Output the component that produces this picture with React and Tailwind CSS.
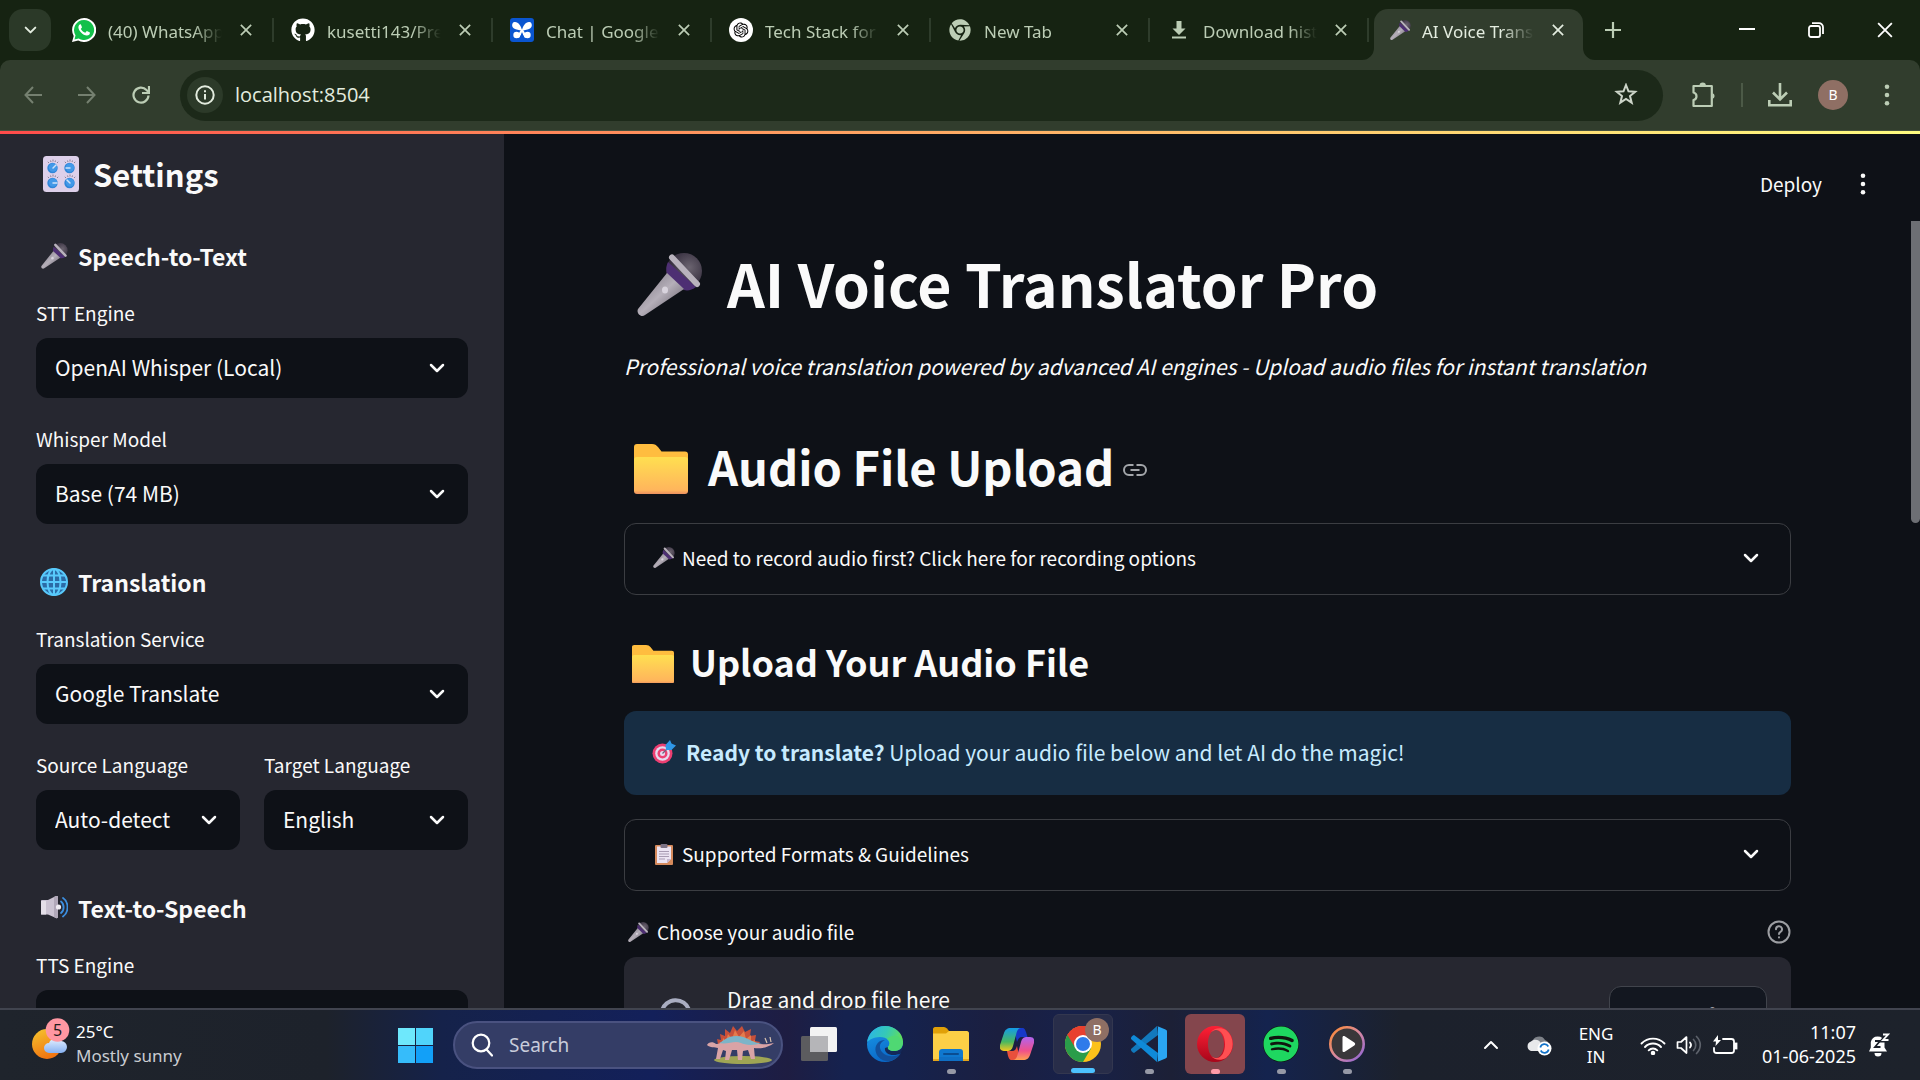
import React from "react";
import { FaGithub, FaChrome, FaSpotify } from "react-icons/fa";
import { RiOpenaiFill } from "react-icons/ri";

/* ---------- emoji drawings ---------- */

function Mic({ className }) {
  return (
    <svg viewBox="0 0 66 64" className={className} aria-hidden="true">
      <defs>
        <linearGradient id="micHandle" x1="0" y1="0" x2="1" y2="1">
          <stop offset="0.2" stopColor="#8d8792" />
          <stop offset="0.5" stopColor="#b5afb9" />
          <stop offset="0.8" stopColor="#7b7580" />
        </linearGradient>
        <radialGradient id="micHead" cx="0.65" cy="0.4" r="0.7">
          <stop offset="0" stopColor="#6b6470" />
          <stop offset="0.6" stopColor="#413a49" />
          <stop offset="1" stopColor="#2d2436" />
        </radialGradient>
      </defs>
      <circle cx="47" cy="18" r="18" fill="url(#micHead)" />
      <path d="M31 9c-2 4-2 8-1 12l17 16c4 1 8 0 12-3z" fill="#4d2f73" />
      <path d="M30 20 1 56c-2 4 3 9 7 6l39-26z" fill="url(#micHandle)" />
      <path d="M35 4.500 60 31" stroke="#b9b3bd" strokeWidth="6" strokeLinecap="round" />
      <ellipse cx="28" cy="37" rx="3" ry="3.500" fill="#d8d3dd" />
    </svg>
  );
}

function Knobs({ className }) {
  const spots = [[10, 12, 3, -3], [27, 12, -4, 0], [10, 27, 4, 0], [27, 27, -3, -3]];
  return (
    <svg viewBox="0 0 36 36" className={className} aria-hidden="true">
      <rect width="36" height="36" rx="3.500" fill="#ddd0ea" />
      {spots.map(([x, y, dx, dy], i) => (
        <g key={i}>
          <path
            d={`M${x - 4} ${y - 5}l-1.200-1.200M${x} ${y - 6.500}v-2M${x + 4} ${y - 5}l1.200-1.200M${x - 2} ${y - 6}l-.5-1.500M${x + 2} ${y - 6}l.5-1.500`}
            stroke="#8b8194"
            strokeWidth="1"
          />
          <circle cx={x - 0.5} cy={y} r="5.200" fill="#2f86d9" />
          <circle cx={x} cy={y - 0.5} r="4.200" fill="#4399e8" />
          <path d={`M${x} ${y}l${dx} ${dy}`} stroke="#cfe4fa" strokeWidth="1.500" strokeLinecap="round" />
        </g>
      ))}
    </svg>
  );
}

function Globe({ className }) {
  return (
    <svg viewBox="0 0 28 28" className={className} fill="none" stroke="#58c9fb" strokeWidth="2" aria-hidden="true">
      <circle cx="14" cy="14" r="13" fill="#2b6ba6" />
      <ellipse cx="14" cy="14" rx="6.500" ry="13" />
      <path d="M14 1v26M1 14h26M3 7.500h22M3 20.500h22" />
    </svg>
  );
}

function Speaker({ className }) {
  return (
    <svg viewBox="0 0 28 24" className={className} aria-hidden="true">
      <path d="M1 5c0-1 .5-1 1-1h6l8-4c1-.5 2 0 2 1v20c0 1-1 1.500-2 1l-8-3.500H2c-1 0-1-.5-1-1.500z" fill="#cbc3d2" />
      <path d="M1 5h5v13.500H1z" fill="#e4dfe8" />
      <path d="M14 1l2-1c1-.5 2 0 2 1v20c0 1-1 1.500-2 1l-2-1z" fill="#b1a8b9" />
      <circle cx="18.500" cy="11" r="2.600" fill="#f0ecf3" />
      <path d="M21 5.500c3.500 2.500 3.500 9 0 11.500M23 2c6 4 6 14.500 0 18.500" fill="none" stroke="#3c8fe0" strokeWidth="1.800" strokeLinecap="round" />
    </svg>
  );
}

function Folder({ className }) {
  return (
    <svg viewBox="0 0 54 50" className={className} aria-hidden="true">
      <defs>
        <linearGradient id="folderFront" x1="0" y1="0" x2="0" y2="1">
          <stop offset="0" stopColor="#ffdf50" />
          <stop offset="0.9" stopColor="#ffb55c" />
          <stop offset="1" stopColor="#ec9060" />
        </linearGradient>
      </defs>
      <path d="M0 3c0-2 1-3 3-3h15c3 0 4 1 6 3l3.500 4.500H51c2 0 3 1 3 3V20H0z" fill="#ffbd3f" />
      <path d="M0 16c0-2 1-3 3-3h48c2 0 3 1 3 3v31c0 2-1 3-3 3H3c-2 0-3-1-3-3z" fill="url(#folderFront)" />
    </svg>
  );
}

function Target({ className }) {
  return (
    <svg viewBox="0 0 24 24" className={className} aria-hidden="true">
      <circle cx="10.500" cy="13.500" r="10" fill="#ec3f72" />
      <circle cx="10.500" cy="13.500" r="7.300" fill="#e7d9ee" />
      <circle cx="10.500" cy="13.500" r="5" fill="#ec3f72" />
      <circle cx="10.500" cy="13.500" r="2.500" fill="#e7d9ee" />
      <path d="m10.500 13.500 7-7" stroke="#6b6480" strokeWidth="1.300" />
      <path d="m14 10-.5-5L18 0l1.500 3.500 4.500 2L19.500 10z" fill="#2f97e8" />
    </svg>
  );
}

function Clipboard({ className }) {
  return (
    <svg viewBox="0 0 18 21" className={className} aria-hidden="true">
      <rect y="1" width="18" height="20" rx="1" fill="#d58a5c" />
      <path d="M2 2.500h14V15l-4 4H2z" fill="#ece4f3" />
      <path d="M16 15h-4v4z" fill="#c5b7d0" />
      <rect x="5.500" y="0" width="7" height="4" rx="1" fill="#7d7386" />
      <path d="M4 7.500h10M4 10h10M4 12.500h10M4 15h6" stroke="#a89bb3" />
    </svg>
  );
}

/* ---------- small line icons ---------- */

function Chevron({ className, width = 2.5 }) {
  return (
    <svg viewBox="0 0 16 10" className={className} fill="none" stroke="currentColor" strokeWidth={width} strokeLinecap="round" strokeLinejoin="round" aria-hidden="true">
      <path d="m2 2 6 6 6-6" />
    </svg>
  );
}

function Cross({ className, width = 2 }) {
  return (
    <svg viewBox="0 0 14 14" className={className} stroke="currentColor" strokeWidth={width} aria-hidden="true">
      <path d="m1 1 12 12M13 1 1 13" />
    </svg>
  );
}

function Dots({ className }) {
  return (
    <svg viewBox="0 0 6 24" className={className} fill="currentColor" aria-hidden="true">
      <circle cx="3" cy="3" r="2.500" />
      <circle cx="3" cy="12" r="2.500" />
      <circle cx="3" cy="21" r="2.500" />
    </svg>
  );
}

/* ---------- browser ---------- */

const WhatsAppIcon = (
  <svg viewBox="0 0 24 24" className="size-6">
    <path d="M12 0a12 12 0 0 0-10.300 18L0 24l6.200-1.600A12 12 0 1 0 12 0z" fill="#fff" />
    <path d="M12 2a10 10 0 0 0-8.500 15.200L2.500 21.500l4.200-1.100A10 10 0 1 0 12 2z" fill="#12c04a" />
    <path d="M8.400 6.300c-.7 0-2 .9-2 3 0 3.300 4.300 8.200 8.500 8.200 1.900 0 3-1.200 3-2.400 0-.5-.1-.6-.4-.8l-2.200-1.100c-.4-.2-.6-.1-.9.2l-.9 1.100c-.2.2-.4.3-.8.100-1.400-.6-2.900-1.900-3.700-3.400-.2-.3-.1-.5.1-.7l.7-.8c.2-.3.2-.4.1-.7l-.9-2.200c-.2-.4-.3-.5-.6-.5z" fill="#fff" />
  </svg>
);

const BotIcon = (
  <svg viewBox="0 0 24 24" className="size-6">
    <rect width="24" height="24" rx="3" fill="#0a55d0" />
    <path d="m12 12.500 3.500 6M12 12.500l-3.500 6" stroke="#fff" strokeWidth="2.500" strokeLinecap="round" />
    <path d="M12 12.500C11.500 8 8 3.500 4.500 4 1.500 4.500 1.500 9 4 10.500c2 1.200 5 1.500 8 2zM12 12.500c.5-4.500 4-9 7.500-8.500 3 .5 3 5 .5 6.500-2 1.200-5 1.500-8 2z" fill="#fff" />
    <circle cx="6.500" cy="17" r="3.200" fill="#fff" />
    <circle cx="17.500" cy="17" r="3.200" fill="#fff" />
    <path d="m12 14-2.500 7h5z" fill="#0a55d0" />
  </svg>
);

const OpenAIIcon = (
  <span className="flex size-6 items-center justify-center rounded-full bg-white text-black">
    <RiOpenaiFill className="size-[18px]" />
  </span>
);

const DownloadIcon = (
  <svg viewBox="0 0 24 24" className="size-6" fill="#bccdb5">
    <path d="M9.500 3h5v7.500h4L12 17 5.500 10.500h4zM5 18.500h14v2H5z" />
  </svg>
);

const tabs = [
  { icon: WhatsAppIcon, title: "(40) WhatsApp" },
  { icon: <FaGithub className="size-6 text-white" />, title: "kusetti143/Pre" },
  { icon: BotIcon, title: "Chat | Google" },
  { icon: OpenAIIcon, title: "Tech Stack for" },
  { icon: <FaChrome className="size-[22px] text-[#bccdb5]" />, title: "New Tab" },
  { icon: DownloadIcon, title: "Download hist" },
];

function Tab({ icon, title }) {
  return (
    <div className="flex w-[219px] items-center pl-4 text-[#bccdb5]">
      <span className="flex w-6 justify-center">{icon}</span>
      <span className="ml-3 w-[114px] overflow-hidden pt-[3px] text-[17px] leading-6 whitespace-nowrap [mask-image:linear-gradient(to_right,black_75%,transparent)]">{title}</span>
      <button aria-label={`Close ${title}`} className="ml-4 flex size-4 items-center justify-center">
        <Cross className="size-3" />
      </button>
      <span className="mr-px ml-auto h-6 w-[2px] bg-[#2e3c2b]" />
    </div>
  );
}

function Flare({ className, d }) {
  return (
    <svg viewBox="0 0 12 12" className={className} fill="#313d2d" aria-hidden="true">
      <path d={d} />
    </svg>
  );
}

function TabStrip() {
  return (
    <div className="flex h-[60px] items-stretch bg-[#162312]">
      <button aria-label="Search tabs" className="ml-[9px] flex size-[42px] items-center justify-center self-center rounded-[14px] bg-[#2b3928] text-[#e3ecdf]">
        <Chevron className="h-2 w-[13px]" />
      </button>
      <div className="ml-[5px] flex">
        {tabs.map((t) => (
          <Tab key={t.title} {...t} />
        ))}
      </div>
      <div className="relative mt-[9px] ml-1 flex w-[209px] items-center rounded-t-[14px] bg-[#313d2d] pb-[9px] pl-4 text-[#e3ecdf]">
        <Flare className="absolute bottom-0 -left-3 size-3" d="M12 0v12H0A12 12 0 0 0 12 0z" />
        <Flare className="absolute -right-3 bottom-0 size-3" d="M0 0v12h12A12 12 0 0 1 0 0z" />
        <Mic className="w-[21px]" />
        <span className="ml-[11px] w-[112px] overflow-hidden pt-[3px] text-[17px] leading-6 whitespace-nowrap [mask-image:linear-gradient(to_right,black_70%,transparent)]">AI Voice Trans</span>
        <button aria-label="Close AI Voice Translator Pro" className="ml-4 flex size-4 items-center justify-center">
          <Cross className="size-3" />
        </button>
      </div>
      <button aria-label="New tab" className="ml-[22px] flex items-center text-[#bccdb5]">
        <svg viewBox="0 0 16 16" className="size-4" stroke="currentColor" strokeWidth="2.200">
          <path d="M8 0v16M0 8h16" />
        </svg>
      </button>
      <div className="mr-[27px] ml-auto flex items-center gap-[53px] text-white">
        <button aria-label="Minimize">
          <svg viewBox="0 0 16 16" className="size-4" stroke="currentColor" strokeWidth="2"><path d="M0 7h16" /></svg>
        </button>
        <button aria-label="Restore">
          <svg viewBox="0 0 16 16" className="size-4" fill="none" stroke="currentColor" strokeWidth="1.800">
            <rect x="1" y="4" width="11" height="11" rx="2" />
            <path d="M4 1.200h7a4 4 0 0 1 4 4V12" />
          </svg>
        </button>
        <button aria-label="Close window"><Cross className="size-4" width={1.600} /></button>
      </div>
    </div>
  );
}

function Toolbar() {
  return (
    <div className="bg-[#162312]">
      <div className="flex h-[71px] items-center rounded-t-[10px] border-b border-[#46523f] bg-[#313d2d] pl-6 text-[#bccdb5]">
        <button aria-label="Back" className="text-[#758070]">
          <svg viewBox="0 0 18 18" className="size-[18px]" fill="none" stroke="currentColor" strokeWidth="2"><path d="M18 9H1.500M9 1 1.500 9 9 17" /></svg>
        </button>
        <button aria-label="Forward" className="ml-9 text-[#758070]">
          <svg viewBox="0 0 18 18" className="size-[18px]" fill="none" stroke="currentColor" strokeWidth="2"><path d="M0 9h16.500M9 1l7.500 8L9 17" /></svg>
        </button>
        <button aria-label="Reload" className="ml-9">
          <svg viewBox="0 0 18 18" className="size-[18px]" fill="none" stroke="currentColor" strokeWidth="2.200">
            <path d="M16.500 9.500A7.500 7.500 0 1 1 14.500 4L17 6.500" />
            <path d="M17 0v7h-7" />
          </svg>
        </button>
        <div className="ml-[30px] flex h-[51px] flex-1 items-center rounded-full bg-[#1c2919] pl-[7px] text-[#e3ecdf]">
          <button aria-label="Site information" className="flex size-9 items-center justify-center rounded-full bg-[#2c3a29]">
            <svg viewBox="0 0 20 20" className="size-5" fill="none" stroke="currentColor" strokeWidth="2">
              <circle cx="10" cy="10" r="8.700" />
              <path d="M10 9v5.500M10 5.300v2" />
            </svg>
          </button>
          <input aria-label="Address" type="text" defaultValue="localhost:8504" className="ml-3 min-w-0 flex-1 bg-transparent pb-px font-['Open_Sans'] text-[20px] leading-7 outline-none" />
          <button aria-label="Bookmark this tab" className="mr-[25px] text-[#cdd5c9]">
            <svg viewBox="0 0 24 24" className="size-6" fill="none" stroke="currentColor" strokeWidth="2">
              <path d="m12 2 2.500 6.300 6.700.5-5.200 4.300 1.700 6.600L12 16l-5.700 3.700L8 13.100 2.800 8.800l6.700-.5z" />
            </svg>
          </button>
        </div>
        <button aria-label="Extensions" className="ml-7">
          <svg viewBox="0 0 26 26" className="size-[26px]" fill="none" stroke="currentColor" strokeWidth="2.200" strokeLinejoin="round">
            <path d="M2.500 4h18.300v20H2.500v-6c4-1 4-6.500 0-7.500z" />
            <path d="M8.500 3.500a3.200 3 0 0 1 6.400 0zM21.500 11a3.200 3.200 0 0 1 0 6z" fill="currentColor" stroke="none" />
          </svg>
        </button>
        <span className="ml-6 h-6 w-[2px] bg-[#4c5a47]" />
        <button aria-label="Downloads" className="ml-[25px]">
          <svg viewBox="0 0 24 24" className="size-6" fill="none" stroke="currentColor" strokeWidth="2.600">
            <path d="M12 0v16M5 9.500l7 7 7-7M1.300 17v5.200h21.400V17" />
          </svg>
        </button>
        <button aria-label="Profile" className="ml-[26px] flex size-[30px] items-center justify-center rounded-full bg-[#8f6f64] text-sm text-white">B</button>
        <button aria-label="Browser menu" className="mr-[30px] ml-9"><Dots className="h-[22px] w-[6px]" /></button>
      </div>
      <div className="h-[3px] bg-linear-to-r from-[#ff4b4b] to-[#fffd80]" />
    </div>
  );
}

/* ---------- application ---------- */

function SelectField({ id, label, value }) {
  return (
    <div className="flex min-w-0 flex-col">
      <label htmlFor={id} className="mb-2 text-[19px] leading-[34px]">{label}</label>
      <div className="relative">
        <select id={id} defaultValue={value} className="h-[60px] w-full appearance-none rounded-xl bg-[#0e1117] pb-[2px] pl-[19px] text-[21px] leading-8 outline-none">
          <option>{value}</option>
        </select>
        <Chevron className="pointer-events-none absolute top-[25px] right-[23px] h-[10px] w-4" />
      </div>
    </div>
  );
}

function SideHeading({ icon, children }) {
  return (
    <h3 className="flex items-center pt-[18px] pl-1 text-[23px] leading-8 font-bold">
      <span className="mr-[10px] flex w-7 justify-center">{icon}</span>
      {children}
    </h3>
  );
}

function Sidebar() {
  return (
    <aside className="flex w-[504px] shrink-0 flex-col gap-6 bg-[#262730] px-9 pt-5">
      <h2 className="mb-1 flex items-center pl-[7px] text-[31px] leading-10 font-bold">
        <Knobs className="mr-[14px] size-9" />
        Settings
      </h2>
      <SideHeading icon={<Mic className="w-[27px]" />}>Speech-to-Text</SideHeading>
      <SelectField id="stt" label="STT Engine" value="OpenAI Whisper (Local)" />
      <SelectField id="model" label="Whisper Model" value="Base (74 MB)" />
      <SideHeading icon={<Globe className="size-7" />}>Translation</SideHeading>
      <SelectField id="service" label="Translation Service" value="Google Translate" />
      <div className="grid grid-cols-2 gap-6">
        <SelectField id="source" label="Source Language" value="Auto-detect" />
        <SelectField id="target" label="Target Language" value="English" />
      </div>
      <SideHeading icon={<Speaker className="w-7" />}>Text-to-Speech</SideHeading>
      <SelectField id="tts" label="TTS Engine" value="" />
    </aside>
  );
}

function Expander({ icon, children }) {
  return (
    <button aria-expanded="false" className="flex h-[72px] shrink-0 items-center rounded-xl border border-[#3b3d42] pr-[31px] pb-[2px] pl-[27px] text-left text-[19px] leading-[30px]">
      <span className="mr-[7px] flex w-[23px] justify-center">{icon}</span>
      {children}
      <Chevron className="ml-auto h-[10px] w-4" />
    </button>
  );
}

function Content() {
  return (
    <main className="relative flex min-w-0 flex-1 bg-[#0e1117]">
      <div className="absolute top-8 right-[54px] flex items-center gap-[38px]">
        <button className="text-[19px] leading-9">Deploy</button>
        <button aria-label="Main menu"><Dots className="h-[22px] w-[6px]" /></button>
      </div>
      <div className="flex min-w-0 flex-1 flex-col gap-6 px-[120px] pt-[111px]">
        <h1 className="mb-1 flex items-center pl-[13px] text-[59px] leading-[75px] font-bold">
          <Mic className="mt-1 mr-6 w-[66px]" />
          AI Voice Translator Pro
        </h1>
        <p className="text-[21px] leading-9 whitespace-nowrap italic">
          Professional voice translation powered by advanced AI engines - Upload audio files for instant translation
        </p>
        <h2 className="flex items-center pt-6 pl-[10px] text-[47px] leading-[67px] font-bold">
          <Folder className="mt-[6px] mr-5 w-[54px]" />
          Audio File Upload
          <a href="#audio-file-upload" aria-label="Link to heading" className="mt-2 ml-[9px] text-[#a3a6aa]">
            <svg viewBox="0 0 24 12" className="h-3 w-6" fill="none" stroke="currentColor" strokeWidth="2">
              <path d="M10.500 1H6a5 5 0 0 0 0 10h4.500M13.500 1H18a5 5 0 0 1 0 10h-4.500M7.500 6h9" />
            </svg>
          </a>
        </h2>
        <Expander icon={<Mic className="w-[22px]" />}>Need to record audio first? Click here for recording options</Expander>
        <h3 className="flex items-center pt-4 pl-2 text-[36px] leading-[52px] font-bold">
          <Folder className="mt-[6px] mr-4 w-[42px]" />
          Upload Your Audio File
        </h3>
        <div role="status" className="flex h-[84px] shrink-0 items-center rounded-xl bg-[#172d43] pb-[2px] pl-7 text-[21px] leading-9 text-[#c7ebff]">
          <Target className="mr-[10px] size-6" />
          <p><strong className="font-bold">Ready to translate?</strong> Upload your audio file below and let AI do the magic!</p>
        </div>
        <Expander icon={<Clipboard className="h-[21px]" />}>Supported Formats &amp; Guidelines</Expander>
        <div className="flex flex-col">
          <div className="mb-2 flex items-center text-[19px] leading-[34px]">
            <Mic className="mr-2 ml-1 w-[21px]" />
            <label htmlFor="audio">Choose your audio file</label>
            <button aria-label="Help" className="ml-auto text-[#9c9ea2]">
              <svg viewBox="0 0 24 24" className="size-6" fill="none" stroke="currentColor" strokeWidth="2" strokeLinecap="round">
                <circle cx="12" cy="12" r="10.500" />
                <path d="M9 9.300a3 3 0 1 1 4.500 2.500c-1 .6-1.500 1-1.500 2.200M12 17.300v.2" />
              </svg>
            </button>
          </div>
          <div className="flex h-[118px] shrink-0 items-center rounded-xl bg-[#262730] px-6">
            <svg viewBox="0 0 54 54" className="mr-[25px] size-[54px]" fill="none" stroke="#a9adc1" strokeWidth="4" aria-hidden="true">
              <path d="M16 43a11 11 0 0 1-2-21 14 14 0 0 1 27-1 11 11 0 0 1 0 22zM27 38V27M21 32l6-6 6 6" />
            </svg>
            <p className="pb-[34px] text-[21px] leading-[34px]">Drag and drop file here</p>
            <input id="audio" type="file" className="sr-only" />
            <button className="ml-auto h-[60px] w-[158px] rounded-xl border border-[#41444c] bg-[#131720] text-[21px] leading-9">Browse files</button>
          </div>
        </div>
      </div>
      <div className="mt-[87px] h-[302px] w-[9px] rounded-b-[5px] bg-[#6d6f74]" />
    </main>
  );
}

/* ---------- taskbar ---------- */

function Weather() {
  return (
    <svg viewBox="0 0 40 42" className="h-[42px] w-10" aria-hidden="true">
      <defs>
        <linearGradient id="sun" x1="0.2" y1="0" x2="0.6" y2="1">
          <stop offset="0" stopColor="#f5c02c" />
          <stop offset="1" stopColor="#f0700f" />
        </linearGradient>
        <linearGradient id="cloud" x1="0" y1="0" x2="0" y2="1">
          <stop offset="0" stopColor="#e6f0ff" />
          <stop offset="1" stopColor="#86b1f2" />
        </linearGradient>
      </defs>
      <circle cx="15" cy="26" r="15" fill="url(#sun)" />
      <path d="M17 35a5 5 0 0 1 0-10 7 7 0 0 1 12-2 6 6 0 0 1 0 12z" fill="url(#cloud)" />
      <circle cx="25.500" cy="12" r="11.800" fill="#ff97a2" />
      <text x="25.500" y="17.500" textAnchor="middle" fontSize="16" fill="#1c1c1c">5</text>
    </svg>
  );
}

function Stegosaurus() {
  return (
    <svg viewBox="0 0 68 38" className="h-[38px] w-[68px]" aria-hidden="true">
      <ellipse cx="36" cy="34" rx="29" ry="4" fill="#9fa554" />
      <path d="m11 18-1-5 4 1-1-6 5 2 0-7 5 4 3-7 4 5 5-5 3 6 6-3-1 7 6-1-1 6 5 1-4 6z" fill="#c8503a" />
      <path d="m15 18 1-6 3 3 2-7 4 5 3-9 4 7 5-6 2 8 5-4 0 7 4-2-1 6z" fill="#e57b4c" />
      <path d="M0 19c1-3 6-4 9-1 5 1 8-7 20-7 14 0 17 11 38 6-6 5-15 6-20 5l1 11h-4l-3-9-5 1-1 9h-4l-1-10-5 0-3 10h-4l1-9-3-1-3 9h-4l2-11c-3-1-8 0-11-3z" fill="#d9a3a6" />
      <path d="M12 17c5-2 8-7 17-7 12 0 16 8 26 7-9 3-17 2-21 0-7-3-13 2-22 0z" fill="#7db4c8" />
      <path d="m60 17-2-5M64 16l-1-5" stroke="#d9c3b0" strokeWidth="1.200" />
    </svg>
  );
}

const TaskViewIcon = (
  <svg viewBox="0 0 36 34" className="w-9">
    <rect x="9" y="0" width="27" height="25" rx="1.500" fill="#f3f3f3" />
    <rect x="0" y="9" width="27" height="25" rx="1.500" fill="#5c5c5f" />
    <path d="M9 9h18v16H9z" fill="#b5b5b8" />
  </svg>
);

const EdgeIcon = (
  <svg viewBox="0 0 36 36" className="size-9">
    <defs>
      <linearGradient id="edgeA" x1="0" y1="0.2" x2="1" y2="0.5">
        <stop offset="0" stopColor="#2bb4e8" />
        <stop offset="0.5" stopColor="#35c8b8" />
        <stop offset="1" stopColor="#66e050" />
      </linearGradient>
      <linearGradient id="edgeB" x1="0" y1="0" x2="0.4" y2="1">
        <stop offset="0" stopColor="#1a9be8" />
        <stop offset="1" stopColor="#0a68c8" />
      </linearGradient>
    </defs>
    <circle cx="18" cy="18" r="18" fill="url(#edgeB)" />
    <path d="M34 27c-4 4-14 5-19-1-4-5-2-10 3-12-8 0-12 8-8 15 5 8 17 9 24-2z" fill="#12509c" />
    <path d="M0 16C2 6 9 0 18 0c10 0 18 7 18 16 0 6-4 9-9 9-4 0-7-2-6-4 4-5-1-10-8-10-6 0-11 3-13 5z" fill="url(#edgeA)" />
    <path d="M36 17c0 6-4 8-9 8-4 0-7-2-6-4l-3 1c-1 5 6 10 17 5l1 1 2-4z" fill="#14224c" opacity="0.9" />
    <path d="M36 16c0 6-4 9-9 9-4 0-7-2-6-4 3-3 2-7-1-8 6-6 14-3 16 3z" fill="#4fd873" />
  </svg>
);

const ExplorerIcon = (
  <svg viewBox="0 0 36 34" className="w-9">
    <path d="M0 2c0-1 1-2 2-2h9c1 0 2 .5 3 1.500L16 4v6H0z" fill="#e0a008" />
    <path d="M0 6.500h13L16 4h18c1 0 2 1 2 2v26H0z" fill="#fccf46" />
    <path d="M6 34V25c0-2 1.500-3 3-3h18c2 0 3 1 3 3v9z" fill="#0f78cf" />
    <path d="M11 27h14" stroke="#0a4d91" strokeWidth="2" strokeLinecap="round" />
    <path d="M0 32h36v2H0z" fill="#e5a51b" />
    <path d="M6 30h24v4H6z" fill="#0f6fc4" />
  </svg>
);

const CopilotIcon = (
  <svg viewBox="0 0 34 32" className="w-[34px]">
    <defs>
      <linearGradient id="cpA" x1="0" y1="0" x2="0" y2="1">
        <stop offset="0" stopColor="#149be8" />
        <stop offset="0.6" stopColor="#48b860" />
        <stop offset="1" stopColor="#f5c81e" />
      </linearGradient>
      <linearGradient id="cpB" x1="0.5" y1="0" x2="0.5" y2="1">
        <stop offset="0" stopColor="#b064f0" />
        <stop offset="0.6" stopColor="#f0508a" />
        <stop offset="1" stopColor="#ffa050" />
      </linearGradient>
    </defs>
    <path d="M14 0h8c3 0 3 2 4 4l1.500 5H22c-3 0-4 2-5 5z" fill="#1638c8" />
    <path d="M20 32h-8c-3 0-3-2-4-4l-1-5h5c3 0 4-2 5-5z" fill="#e8503c" />
    <path d="M11 0h10c-3 0-4 3-5 7l-3 11c-1 4-3 5-6 5H4c-3 0-5-2-4-6L4 5c1-3 3-5 7-5z" fill="url(#cpA)" />
    <path d="M23 32H13c3 0 4-3 5-7l3-11c1-4 3-5 6-5h3c3 0 5 2 4 6l-4 12c-1 3-3 5-7 5z" fill="url(#cpB)" />
  </svg>
);

const ChromeIcon = (
  <svg viewBox="0 0 44 44" className="size-11">
    <circle cx="18" cy="26" r="18" fill="#fcc21b" />
    <path d="M18 26 2.400 17A18 18 0 0 1 33.600 17z" fill="#e8402f" />
    <path d="M18 26 2.400 17A18 18 0 0 0 18 44l8-13.500z" fill="#2a9d4a" />
    <path d="M18 17h15.600A18 18 0 0 0 2.400 17l8 13z" fill="#e8402f" />
    <circle cx="18" cy="26" r="9" fill="#fff" />
    <circle cx="18" cy="26" r="7" fill="#2f7bea" />
    <circle cx="32" cy="12" r="12" fill="#8f6f64" />
    <text x="32" y="17" textAnchor="middle" fontSize="14" fill="#fff">B</text>
  </svg>
);

const CodeIcon = (
  <svg viewBox="0 0 36 36" className="size-9">
    <path d="M26 0 0 23c-.5 1 1 3.500 3 4L27 9z" fill="#1279bd" />
    <path d="M26 36 0 13c-.5-1 1-3.500 3-4L27 27z" fill="#0f8ad8" />
    <path d="M26 0l8.500 3.500c1 .5 1.500 1 1.500 2v25c0 1-.5 1.500-1.500 2L26 36c1-.5 1-1 1-2V2c0-1 0-1.500-1-2z" fill="#2aa6f2" />
  </svg>
);

const OperaIcon = (
  <svg viewBox="0 0 36 36" className="size-9">
    <defs>
      <linearGradient id="opA" x1="0" y1="0" x2="0" y2="1">
        <stop offset="0" stopColor="#ff2035" />
        <stop offset="1" stopColor="#a8061a" />
      </linearGradient>
    </defs>
    <path fillRule="evenodd" d="M18 0a18 18 0 1 0 0 36 18 18 0 1 0 0-36zm1 4c-5 0-8 6-8 14s3 14 8 14c4 0 8-6 8-14S23 4 19 4z" fill="url(#opA)" />
    <path d="M14 6c3-4 10-5 15-2a18 18 0 0 1 0 28c-5 3-12 2-15-2 8 6 14-2 14-12S22 0 14 6z" fill="#ff4f52" />
  </svg>
);

const SpotifyIcon = (
  <span className="flex size-9 items-center justify-center rounded-full bg-[#10160f]">
    <FaSpotify className="size-9 text-[#1ed760]" />
  </span>
);

const MediaIcon = (
  <svg viewBox="0 0 36 36" className="size-9">
    <defs>
      <linearGradient id="mpA" x1="0" y1="0" x2="1" y2="1">
        <stop offset="0" stopColor="#ff8a2b" />
        <stop offset="0.5" stopColor="#d98aa0" />
        <stop offset="1" stopColor="#8a62d8" />
      </linearGradient>
    </defs>
    <circle cx="18" cy="18" r="16.700" fill="#39373a" stroke="url(#mpA)" strokeWidth="2.600" />
    <path d="M13.500 11.500c0-1.500 1-2 2.300-1.200l9.500 6.200c1.200.8 1.200 2.200 0 3l-9.500 6.200c-1.300.8-2.300.3-2.300-1.200z" fill="#fff" />
  </svg>
);

const apps = [
  { name: "Task View", icon: TaskViewIcon, tile: "", dot: "bg-transparent w-[9px]" },
  { name: "Edge", icon: EdgeIcon, tile: "", dot: "bg-transparent w-[9px]" },
  { name: "File Explorer", icon: ExplorerIcon, tile: "", dot: "bg-[#9699a6] w-[9px]" },
  { name: "Copilot", icon: CopilotIcon, tile: "", dot: "bg-transparent w-[9px]" },
  { name: "Chrome", icon: ChromeIcon, tile: "bg-[#282d49] border border-[#33374f]", dot: "bg-[#4cc2ff] w-6" },
  { name: "VS Code", icon: CodeIcon, tile: "", dot: "bg-[#9699a6] w-[9px]" },
  { name: "Opera", icon: OperaIcon, tile: "bg-[#84464d]", dot: "bg-[#ff9aa8] w-[9px]" },
  { name: "Spotify", icon: SpotifyIcon, tile: "", dot: "bg-[#9699a6] w-[9px]" },
  { name: "Media Player", icon: MediaIcon, tile: "", dot: "bg-[#9699a6] w-[9px]" },
];

function Tray() {
  return (
    <div className="ml-auto flex items-center text-[17px] leading-6 text-white">
      <button aria-label="Show hidden icons"><Chevron className="h-[10px] w-4 rotate-180" width={2} /></button>
      <svg viewBox="0 0 26 22" className="ml-[27px] w-[26px]" aria-hidden="true">
        <path d="M6 9a7 7 0 0 1 13-3 6 6 0 0 1 4 8H7z" fill="#7d8188" />
        <path d="M5 17a5 5 0 0 1 0-9.500c3-3 9-2 10 2l5 7.500z" fill="#e8e9eb" />
        <circle cx="18.500" cy="14.500" r="7" fill="#fff" />
        <path d="M14.300 13.500a4.300 4.300 0 0 1 8-1M22.700 15.500a4.300 4.300 0 0 1-8 1" fill="none" stroke="#1272c9" strokeWidth="1.700" />
      </svg>
      <button className="ml-[26px] w-9 text-center leading-[23px]">ENG<br />IN</button>
      <button aria-label="Network, volume and battery" className="ml-[26px] flex items-center gap-[10px]">
        <svg viewBox="0 0 26 20" className="w-[26px]" fill="none" stroke="currentColor" strokeWidth="1.900" strokeLinecap="round">
          <path d="M1.500 8.500a16 16 0 0 1 23 0M5 12a11 11 0 0 1 16 0M8.700 15.300a6 6 0 0 1 8.600 0" />
          <circle cx="13" cy="18" r="1.300" fill="currentColor" />
        </svg>
        <svg viewBox="0 0 26 20" className="w-[26px]" fill="none" stroke="currentColor" strokeWidth="1.700" strokeLinejoin="round" strokeLinecap="round">
          <path d="M1.500 7v6H5l5.500 5V2L5 7zM14 7.500c1.300 1.500 1.300 3.500 0 5" />
          <path d="M17.500 4.500c3 3 3 8 0 11M20.500 1.500c5 5 5 12 0 17" stroke="#5d626b" />
        </svg>
        <svg viewBox="0 0 26 20" className="w-[26px]" fill="none" stroke="currentColor" strokeWidth="1.800" strokeLinecap="round">
          <path d="M11 4h8.500a2.500 2.500 0 0 1 2.500 2.500v9a2.500 2.500 0 0 1-2.500 2.500h-15A2.500 2.500 0 0 1 2 15.500V13" />
          <path d="M23 8.500h1.500v5H23z" fill="currentColor" />
          <path d="M6 0 1 6.500h3L3.500 11 9 5H6z" fill="currentColor" stroke="none" />
        </svg>
      </button>
      <p className="mb-[2px] ml-6 text-right text-[18px] leading-6">11:07<br />01-06-2025</p>
      <button aria-label="Notifications" className="mr-[30px] ml-3">
        <svg viewBox="0 0 22 24" className="w-[22px]" fill="currentColor">
          <path d="M1 18.500h18l-2.500-4V9A7 7 0 0 0 2.800 9v5.500zM6.500 20h7a3.500 3.500 0 0 1-7 0z" />
          <path d="M7 8h5l-5 6h5.500" stroke="#1d222b" strokeWidth="1.800" fill="none" />
          <path d="M14 1h6l-5.500 6.500H21" stroke="#1d222b" strokeWidth="4" fill="none" />
          <path d="M15 1.500h5L15 7h5.500" stroke="currentColor" strokeWidth="1.800" fill="none" />
        </svg>
      </button>
    </div>
  );
}

function Taskbar() {
  return (
    <footer className="flex h-[72px] shrink-0 items-center border-t-2 border-[#41444f] bg-[linear-gradient(90deg,#1f242c_0%,#1d222b_17%,#15224a_23%,#13205a_34%,#1e1d42_41%,#15224f_44%,#15224d_47%,#1b1f40_52%,#17214a_56%,#1c2036_61%,#14234e_66%,#1c212c_73%,#1d222b_100%)]">
      <button className="mb-3 ml-8 flex w-[366px] items-center text-left text-[17px] leading-6 text-white">
        <Weather />
        <span className="mt-[10px] ml-1">25°C<br /><span className="text-[#c9ccd1]">Mostly sunny</span></span>
      </button>
      <button aria-label="Start" className="grid size-[35px] grid-cols-2 gap-px">
        <span className="bg-[#6ee8fc]" />
        <span className="bg-[#50d4fb]" />
        <span className="bg-[#36bcfa]" />
        <span className="bg-[#12a0f8]" />
      </button>
      <label className="ml-5 flex h-12 w-[330px] items-center rounded-full border-2 border-[#4a5280] bg-[#343d66] pr-[6px] pl-4 text-white">
        <svg viewBox="0 0 22 24" className="h-6 w-[22px]" fill="none" stroke="currentColor" strokeWidth="2.200" strokeLinecap="round" aria-hidden="true">
          <circle cx="10" cy="10" r="8.300" />
          <path d="m16 17 5 5.500" />
        </svg>
        <input type="search" aria-label="Search" placeholder="Search" className="ml-4 min-w-0 flex-1 bg-transparent text-[19px] leading-7 outline-none placeholder:text-[#c8ccdb]" />
        <Stegosaurus />
      </label>
      <div className="mb-[2px] ml-[6px] flex gap-[6px]">
        {apps.map((a) => (
          <button key={a.name} aria-label={a.name} className={`relative flex h-[60px] w-[60px] items-center justify-center rounded-md ${a.tile}`}>
            <span className={a.name === "Chrome" ? "mb-2 ml-2" : ""}>{a.icon}</span>
            <span className={`absolute bottom-0 h-[5px] rounded-full ${a.dot}`} />
          </button>
        ))}
      </div>
      <Tray />
    </footer>
  );
}

export default function App() {
  return (
    <div className="flex h-screen flex-col overflow-hidden font-['Noto_Sans',sans-serif]">
      <header>
        <TabStrip />
        <Toolbar />
      </header>
      <div className="flex min-h-0 flex-1 overflow-hidden bg-[#0e1117] font-['Noto_Sans_CJK_SC',sans-serif] text-[#fafafa]">
        <Sidebar />
        <Content />
      </div>
      <Taskbar />
    </div>
  );
}
